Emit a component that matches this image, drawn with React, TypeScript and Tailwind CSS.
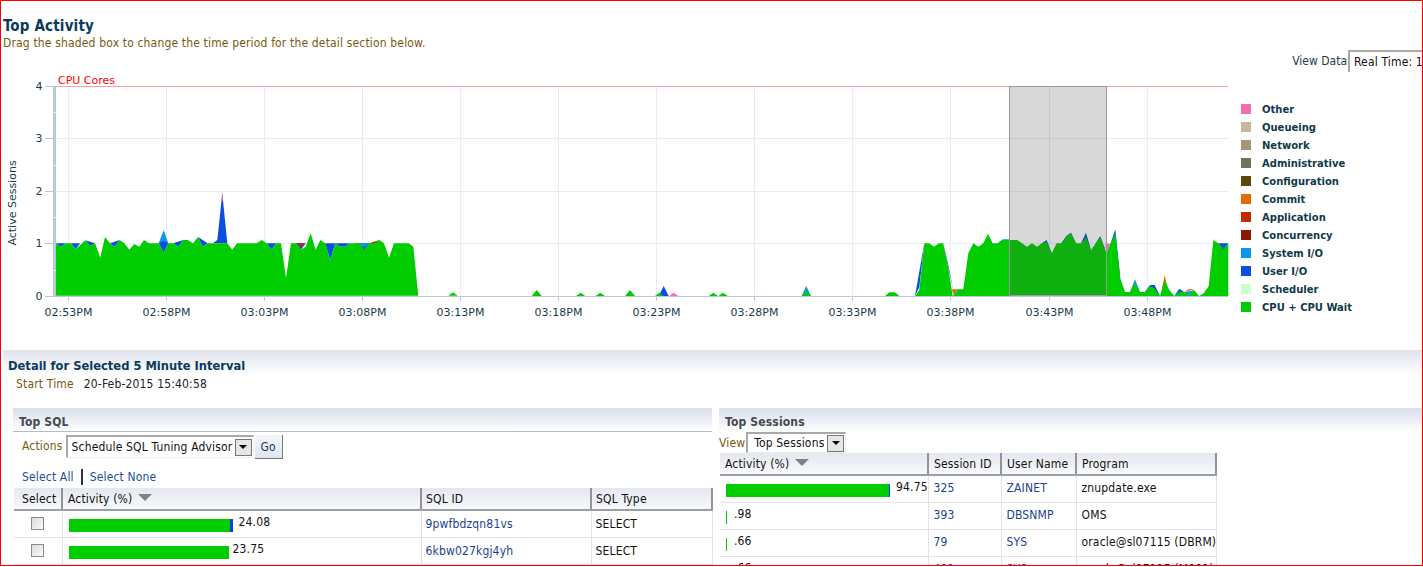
const FONT = { fontFamily: '"DejaVu Sans Condensed","DejaVu Sans",sans-serif' };
const CHART = { fontFamily: '"DejaVu Sans",sans-serif' };

type P = number[][];
const z2 = (a: P) => a.map(([x, y]) => [x / 3, 180 + y / 3]);
const z3 = (a: P) => a.map(([x, y]) => [480 + x / 3, 230 + y / 3]);
const z4 = (a: P) => a.map(([x, y]) => [880 + x / 3, 200 + y / 3]);
const str = (a: P) => a.map(([x, y]) => `${x.toFixed(1)},${y.toFixed(1)}`).join(' ');

const greenA = z2([[168,347],[168,190],[182,200],[198,190],[212,190],[227,207],[241,195],[256,181],[271,198],[285,190],[301,233],[315,171],[330,190],[344,200],[359,180],[373,190],[388,209],[403,192],[418,200],[432,180],[447,190],[476,190],[491,219],[505,190],[520,190],[535,200],[550,180],[564,180],[579,190],[594,171],[608,200],[623,190],[652,190],[667,190],[682,190],[697,209],[711,190],[770,190],[785,180],[800,190],[814,209],[829,190],[843,190],[858,295],[873,190],[888,190],[903,209],[917,200],[932,160],[947,209],[961,180],[976,190],[991,240],[1006,190],[1020,200],[1035,200],[1050,190],[1079,190],[1094,209],[1108,190],[1123,190],[1138,180],[1152,190],[1167,233],[1182,190],[1226,190],[1240,200],[1255,347]]);
const tri = (x: number, w: number, top: number) => z3([[x - w, 198],[x, top],[x + w, 198]]);
const greenSmall: P[] = [
  z2([[1345,347],[1359,337],[1373,347]]),
  tri(170,15,180), tri(302,14,188), tri(361,14,188), tri(450,15,180), tri(538,13,188), tri(700,14,188), tri(729,14,188), tri(979,14,182),
  z3([[1215,198],[1228,187],[1245,187],[1258,198]]),
];
const greenB = z4([[105,288],[118,270],[133,130],[148,130],[162,140],[177,130],[190,130],[205,205],[218,288],[235,268],[250,268],[265,160],[280,130],[295,140],[310,130],[324,101],[338,130],[353,130],[368,120],[383,120],[412,120],[426,130],[441,140],[456,130],[471,140],[485,130],[500,125],[515,160],[530,130],[544,130],[559,110],[573,100],[588,130],[603,130],[618,112],[633,150],[647,130],[661,112],[676,150],[680,160],[692,130],[706,100],[721,235],[735,276],[750,276],[765,250],[780,276],[795,276],[810,258],[824,265],[840,288],[854,240],[868,270],[883,288],[898,275],[912,276],[927,286],[942,270],[957,288],[971,280],[986,258],[1000,121],[1015,130],[1030,148],[1045,130],[1045,288]]);

const BLUE = '#0a4fe0', SYS = '#0c98e8', RED = '#c22a06', ORG = '#e56c00', PINK = '#f26fb0';
const patches: [string, P][] = [
  [BLUE, z2([[168,190],[198,190],[182,200]])],
  [BLUE, z2([[212,190],[241,190],[227,207]])],
  [BLUE, z2([[256,181],[285,190],[271,198]])],
  [BLUE, z2([[330,190],[359,180],[344,200]])],
  [SYS, z2([[476,190],[491,150],[505,190]])],
  [BLUE, z2([[476,190],[491,183],[505,190],[491,219]])],
  [BLUE, z2([[520,190],[550,180],[535,200]])],
  [BLUE, z2([[594,171],[623,190],[608,200]])],
  [BLUE, z2([[638,190],[652,180],[667,40],[682,190]])],
  [PINK, z2([[664,62],[667,35],[670,62]])],
  [BLUE, z2([[800,190],[829,190],[814,209]])],
  [BLUE, z2([[888,190],[917,190],[903,209]])],
  [RED, z2([[888,190],[917,190],[903,201]])],
  [BLUE, z2([[975,190],[991,240],[1006,190]])],
  [BLUE, z2([[1006,190],[1050,190],[1035,200],[1020,200]])],
  [BLUE, z2([[1065,190],[1108,190],[1094,209],[1079,209]])],
  [SYS, z2([[1065,190],[1108,190],[1094,200],[1079,198]])],
  [RED, z2([[1108,190],[1138,180],[1123,202]])],
  [BLUE, z3([[536,198],[551,168],[566,198]])],
  [PINK, z3([[568,198],[581,188],[595,198]])],
  [SYS, z3([[965,198],[979,168],[993,198]])],
  [BLUE, z4([[105,288],[118,262],[133,130]])],
  [BLUE, z4([[190,130],[205,195],[222,280],[205,205]])],
  [ORG, z4([[215,268],[235,268],[220,283]])],
  [SYS, z4([[218,288],[235,268],[225,276]])],
  [SYS, z4([[353,130],[368,118],[388,118],[388,125]])],
  [BLUE, z4([[485,130],[500,120],[515,160]])],
  [BLUE, z4([[544,130],[559,108],[573,98],[588,130]])],
  [BLUE, z4([[603,130],[618,98],[633,150]])],
  [BLUE, z4([[647,130],[661,108],[676,150]])],
  [PINK, z4([[676,135],[680,130],[692,132],[680,160]])],
  [BLUE, z4([[692,130],[706,88],[721,235]])],
  [SYS, z4([[750,276],[765,238],[780,276]])],
  [BLUE, z4([[795,276],[810,255],[824,255],[840,288]])],
  [ORG, z4([[845,270],[854,225],[860,255]])],
  [BLUE, z4([[883,288],[898,266],[912,276]])],
  [ORG, z4([[912,276],[927,267],[942,268]])],
  [SYS, z4([[912,276],[927,274],[942,270],[927,288]])],
  [BLUE, z4([[1015,130],[1045,130],[1030,150]])],
];

const ticks = ['02:53PM','02:58PM','03:03PM','03:08PM','03:13PM','03:18PM','03:23PM','03:28PM','03:33PM','03:38PM','03:43PM','03:48PM'];
const legend: [string, string][] = [
  ['Other','#f26fb0'],['Queueing','#c4b79b'],['Network','#a3977a'],['Administrative','#75745a'],['Configuration','#5e4708'],['Commit','#e56c00'],['Application','#c22a06'],['Concurrency','#8b1a00'],['System I/O','#0c98e8'],['User I/O','#0a4fe0'],['Scheduler','#ccffcc'],['CPU + CPU Wait','#00cc00'],
];

function Chart() {
  return (
    <svg width="1233" height="278" viewBox="0 72 1233 278" className="block shrink-0 tracking-normal" style={CHART}>
      {[138.5,191.5,243.5].map(y => <line key={y} x1="55" x2="1228" y1={y} y2={y} stroke="#e9ecf0" />)}
      {ticks.map((t, i) => {
        const x = Math.round(68 + i * 98.05) + 0.5;
        return (
          <g key={t}>
            <line x1={x} x2={x} y1="86" y2="296" stroke="#e9ecf0" />
            <line x1={x} x2={x} y1="296" y2="301" stroke="#b9c9dc" />
            <text x={x} y="316" textAnchor="middle" fontSize="11" fill="#1c3a4a">{t}</text>
          </g>
        );
      })}
      <line x1="55" x2="1228" y1="86.5" y2="86.5" stroke="#ff9c9c" />
      <text x="58" y="84" fontSize="11" fill="#ff0000">CPU Cores</text>
      <rect x="53" y="86" width="3" height="210" fill="#b9c9dc" />
      {[112,165,217,270].map(y => <rect key={y} x="53" y={y} width="3" height="1" fill="#e4e9f0" />)}
      <line x1="53" x2="1228" y1="296.5" y2="296.5" stroke="#b9c9dc" />
      {[86.5,138.5,191.5,243.5,296.5].map(y => <line key={y} x1="45" x2="54" y1={y} y2={y} stroke="#b9c9dc" />)}
      {[4,3,2,1,0].map((n, i) => <text key={n} x="39" y={89.5 + i * 52.5} textAnchor="middle" fontSize="11" fill="#1c3a4a">{n}</text>)}
      <text transform="translate(16,203) rotate(-90)" textAnchor="middle" fontSize="11" fill="#1c3a4a">Active Sessions</text>
      {patches.map(([c, p], i) => <polygon key={i} points={str(p)} fill={c} />)}
      <polygon points={str(greenA)} fill="#00cc00" />
      {greenSmall.map((p, i) => <polygon key={i} points={str(p)} fill="#00cc00" />)}
      <polygon points={str(greenB)} fill="#00cc00" />
      <rect x="1009.5" y="86.5" width="97" height="209" fill="#474747" fillOpacity="0.21" stroke="#9a9a9a" />
    </svg>
  );
}

function Legend() {
  return (
    <div className="flex flex-col pt-[28px] pl-[8px] tracking-normal" style={CHART}>
      {legend.map(([n, c]) => (
        <div key={n} className="flex items-center h-[18px] whitespace-nowrap">
          <span className="block w-[10px] h-[10px] mr-[11px]" style={{ background: c }} />
          <span className="text-[10px] font-bold text-[#0f3a48]">{n}</span>
        </div>
      ))}
    </div>
  );
}

function SelectBox({ label, w }: { label: string; w: string }) {
  return (
    <div className={`${w} flex items-center border-l-2 border-t-2 border-[#a9a9a9] border-r border-b border-r-[#eeeeee] border-b-[#eeeeee] bg-white pr-px text-[12px] text-[#111] whitespace-nowrap`}>
      <span className="flex-1">{label}</span>
      <span className="w-[17px] h-[17px] flex items-center justify-center border border-[#777] bg-[#e6e6e6]">
        <span className="block w-0 h-0 border-l-[4px] border-r-[4px] border-t-[4px] border-l-transparent border-r-transparent border-t-black" />
      </span>
    </div>
  );
}

const Sort = () => <span className="inline-block ml-[6px] w-0 h-0 align-[2px] border-l-[7px] border-r-[7px] border-t-[7px] border-l-transparent border-r-transparent border-t-[#7c828c]" />;

const th = 'h-[22px] text-left font-normal text-[12px] text-[#111] border-r-2 border-b-2 border-r-[#8f949c] border-b-[#9a9fa8] bg-gradient-to-b from-[#e4e7ef] to-[#f8f9fa] whitespace-nowrap';
const td = 'text-[12px] border-r border-b border-[#e1e3e6] whitespace-nowrap';
const dark = 'text-[#111]';
const link = 'text-[#1c3f94]';

function Bar({ green, blue = 0, val, gap = 6 }: { green: number; blue?: number; val: string; gap?: number }) {
  return (
    <div className="flex items-start">
      <span className="block shrink-0 h-[13px] mt-[4px]" style={{ width: green, background: '#00cc00' }} />
      {blue > 0 && <span className="block shrink-0 h-[13px] mt-[4px]" style={{ width: blue, background: '#0a3fe8' }} />}
      <span className="text-[12px] leading-[14px] text-[#111]" style={{ marginLeft: gap }}>{val}</span>
    </div>
  );
}

const Check = () => <span className="block ml-[17px] w-[13px] h-[13px] border border-[#8a8a8a] bg-gradient-to-br from-[#dcdcdc] to-[#fafafa]" />;

function TopSql() {
  const rows = [
    { g: 161, b: 3, v: '24.08', id: '9pwfbdzqn81vs', gap: 6 },
    { g: 160, b: 0, v: '23.75', id: '6kbw027kgj4yh', gap: 4 },
  ];
  return (
    <div className="w-[699px] shrink-0">
      <div className="h-[24px] flex items-end pl-[6px] border-b border-[#b0bcd2] bg-gradient-to-b from-[#d9deea] to-white">
        <span className="text-[12px] font-bold text-[#454a50]">Top SQL</span>
      </div>
      <div className="flex items-start mt-[3px] pl-[9px] h-[24px]">
        <span className="text-[12px] text-[#7a5a10] h-[23px] leading-[23px]">Actions</span>
        <SelectBox label="Schedule SQL Tuning Advisor" w="w-[188px] h-[23px] ml-[3px] pl-[4px]" />
        <span className="ml-px w-[28px] h-[24px] flex items-center justify-center border-r border-b border-[#777] bg-gradient-to-b from-[#f4f6fa] to-[#dfe5ef] text-[12px] text-[#1c3a5c]">Go</span>
      </div>
      <div className="flex items-center h-[16px] mt-[10px] pl-[9px] text-[12px] text-[#1c4f94]">
        <span>Select All</span>
        <span className="w-[2px] h-[16px] mx-[7px] bg-[#333]" />
        <span>Select None</span>
      </div>
      <table className="table-fixed border-collapse mt-[3px] ml-px w-[698px]">
        <colgroup><col className="w-[48px]" /><col className="w-[359px]" /><col className="w-[170px]" /><col className="w-[121px]" /></colgroup>
        <thead><tr>
          <th className={`${th} pl-[8px]`}>Select</th>
          <th className={`${th} pl-[5px]`}>Activity (%)<Sort /></th>
          <th className={`${th} pl-[4px]`}>SQL ID</th>
          <th className={`${th} pl-[4px]`}>SQL Type</th>
        </tr></thead>
        <tbody>
          {rows.map(r => (
            <tr key={r.id} className="h-[27px]">
              <td className={td}><Check /></td>
              <td className={`${td} pl-[6px]`}><Bar green={r.g} blue={r.b} val={r.v} gap={r.gap} /></td>
              <td className={`${td} ${link} pl-[4px]`}>{r.id}</td>
              <td className={`${td} ${dark} pl-[4px]`}>SELECT</td>
            </tr>
          ))}
        </tbody>
      </table>
    </div>
  );
}

function TopSessions() {
  const rows = [
    { g: 163, b: 1, v: '94.75', s: '325', u: 'ZAINET', p: 'znupdate.exe', gap: 6 },
    { g: 1, b: 0, v: '.98', s: '393', u: 'DBSNMP', p: 'OMS', gap: 7 },
    { g: 1, b: 0, v: '.66', s: '79', u: 'SYS', p: 'oracle@sl07115 (DBRM)', gap: 7 },
    { g: 1, b: 0, v: '.66', s: '491', u: 'SYS', p: 'oracle@sl07115 (M001)', gap: 7 },
  ];
  return (
    <div className="flex-1 min-w-0">
      <div className="h-[24px] flex items-end pl-[6px] pb-px bg-gradient-to-b from-[#d9deea] to-white">
        <span className="text-[12px] font-bold text-[#454a50]">Top Sessions</span>
      </div>
      <div className="flex items-center h-[21px]">
        <span className="text-[12px] text-[#7a5a10]">View</span>
        <SelectBox label="Top Sessions" w="w-[100px] h-[21px] ml-px pl-[6px]" />
      </div>
      <table className="table-fixed border-collapse ml-px w-[496px]">
        <colgroup><col className="w-[208px]" /><col className="w-[73px]" /><col className="w-[75px]" /><col className="w-[140px]" /></colgroup>
        <thead><tr>
          <th className={`${th} pl-[5px]`}>Activity (%)<Sort /></th>
          <th className={`${th} pl-[5px]`}>Session ID</th>
          <th className={`${th} pl-[5px]`}>User Name</th>
          <th className={`${th} pl-[5px]`}>Program</th>
        </tr></thead>
        <tbody>
          {rows.map(r => (
            <tr key={r.s} className="h-[27px]">
              <td className={`${td} pl-[6px]`}><Bar green={r.g} blue={r.b} val={r.v} gap={r.gap} /></td>
              <td className={`${td} ${link} pl-[5px] pb-[2px]`}>{r.s}</td>
              <td className={`${td} ${link} pl-[5px] pb-[2px]`}>{r.u}</td>
              <td className={`${td} ${dark} pl-[5px] pb-[2px]`}>{r.p}</td>
            </tr>
          ))}
        </tbody>
      </table>
    </div>
  );
}

export default function App() {
  return (
    <div className="w-[1423px] h-[566px] border border-[#ff0000] overflow-hidden bg-white box-border tracking-[0.16px]" style={FONT}>
      <div className="pl-[2px] pt-[16px] h-[49px]">
        <div className="text-[15px] leading-[18px] font-bold text-[#0b3a5c]">Top Activity</div>
        <div className="text-[12px] leading-[16px] text-[#7a5a10]">Drag the shaded box to change the time period for the detail section below.</div>
      </div>
      <div className="flex justify-end items-center h-[22px]">
        <span className="text-[12px] tracking-normal text-[#1c3a4a] mr-px">View Data</span>
        <div className="w-[74px] h-[22px] flex items-center overflow-hidden whitespace-nowrap border-l-2 border-t-2 border-[#a9a9a9] pl-[4px] text-[12px] text-[#111]">Real Time: 15 Second Refresh</div>
      </div>
      <div className="flex h-[278px] -ml-px">
        <Chart />
        <Legend />
      </div>
      <div className="ml-[2px] h-[25px] flex items-end pl-[5px] bg-gradient-to-b from-[#dfe3ec] to-white">
        <span className="text-[12.8px] tracking-normal font-bold text-[#0b3a5c]">Detail for Selected 5 Minute Interval</span>
      </div>
      <div className="flex h-[18px] items-center pl-[15px] text-[12px]">
        <span className="text-[#7a5a10] mr-[10px]">Start Time</span>
        <span className="text-[#222]">20-Feb-2015 15:40:58</span>
      </div>
      <div className="flex mt-[15px] ml-[12px] gap-[7px]">
        <TopSql />
        <TopSessions />
      </div>
    </div>
  );
}
